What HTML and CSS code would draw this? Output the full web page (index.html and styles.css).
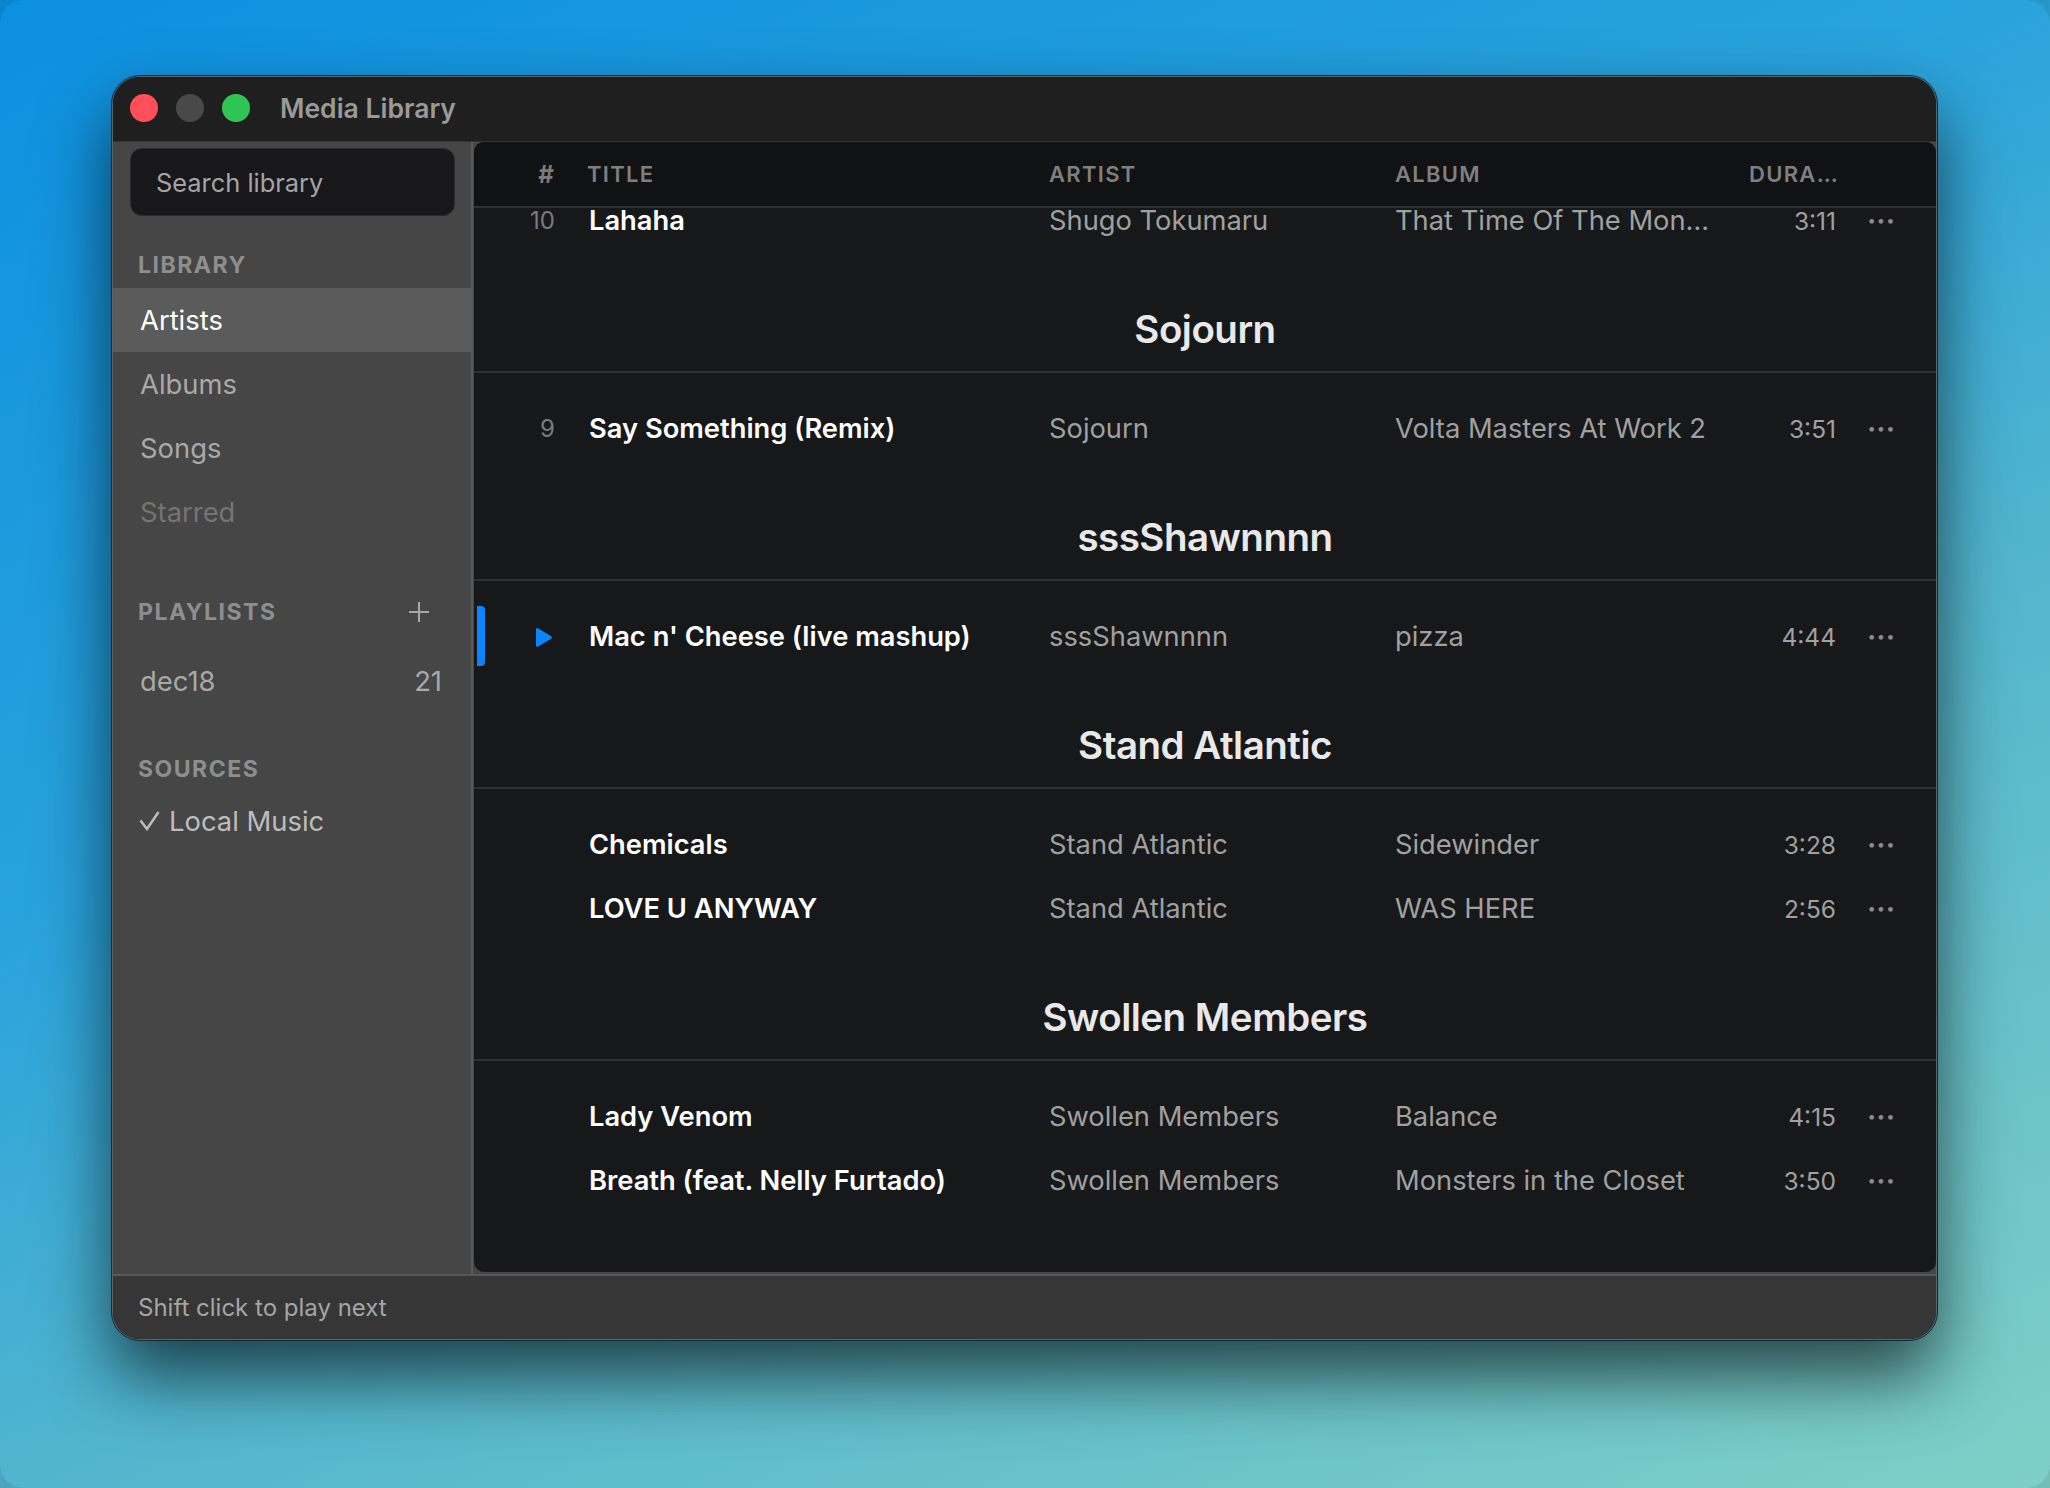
FILE: index.html
```html
<!DOCTYPE html>
<html lang="en">
<head>
  <meta charset="UTF-8">
  <title>Media Library</title>
  <link rel="stylesheet" href="styles.css">
</head>
<body>
  <div class="window">
    <div class="titlebar">
      <span class="light red"></span>
      <span class="light grey"></span>
      <span class="light green"></span>
      <span class="window-title">Media Library</span>
    </div>

    <div class="content">
      <div class="sidebar">
        <div class="search">Search library</div>

        <div class="side-head side-head-library">LIBRARY</div>
        <div class="side-item active">Artists</div>
        <div class="side-item">Albums</div>
        <div class="side-item">Songs</div>
        <div class="side-item muted">Starred</div>

        <div class="side-head side-head-playlists">
          <span>PLAYLISTS</span>
          <svg class="plus" width="20" height="20" viewBox="0 0 20 20"><path d="M10 0v20M0 10h20" stroke="#a8a8a8" stroke-width="2"/></svg>
        </div>
        <div class="side-item playlist"><span>dec18</span><span>21</span></div>

        <div class="side-head side-head-sources">SOURCES</div>
        <div class="source">
          <svg class="check" width="21" height="20" viewBox="0 0 21 20"><path d="M1.5 9.500l6.500 8.500L19.500 1" fill="none" stroke="#bdbdbd" stroke-width="2.500"/></svg>
          <span>Local Music</span>
        </div>
      </div>

      <div class="main">
        <div class="table-head">
          <span class="col-num">#</span>
          <span class="col-title">TITLE</span>
          <span class="col-artist">ARTIST</span>
          <span class="col-album">ALBUM</span>
          <span class="col-time">DURA…</span>
        </div>

        <div class="list">
          <div class="scroller">
            <div class="row">
              <span class="col-num">10</span>
              <span class="col-title">Lahaha</span>
              <span class="col-artist">Shugo Tokumaru</span>
              <span class="col-album">That Time Of The Mon…</span>
              <span class="col-time">3:11</span>
              <span class="more">···</span>
            </div>

            <h2 class="group">Sojourn</h2>
            <div class="row">
              <span class="col-num">9</span>
              <span class="col-title">Say Something (Remix)</span>
              <span class="col-artist">Sojourn</span>
              <span class="col-album">Volta Masters At Work 2</span>
              <span class="col-time">3:51</span>
              <span class="more">···</span>
            </div>

            <h2 class="group">sssShawnnnn</h2>
            <div class="row playing">
              <span class="col-num"><svg width="16" height="19" viewBox="0 0 16 19"><path d="M0 1.500C0 .4.9-.3 1.900.2l13.300 8c.9.6.9 2 0 2.600L1.900 18.800C.9 19.300 0 18.600 0 17.500z" fill="#0a84ff"/></svg></span>
              <span class="col-title">Mac n' Cheese (live mashup)</span>
              <span class="col-artist">sssShawnnnn</span>
              <span class="col-album">pizza</span>
              <span class="col-time">4:44</span>
              <span class="more">···</span>
            </div>

            <h2 class="group">Stand Atlantic</h2>
            <div class="row">
              <span class="col-num"></span>
              <span class="col-title">Chemicals</span>
              <span class="col-artist">Stand Atlantic</span>
              <span class="col-album">Sidewinder</span>
              <span class="col-time">3:28</span>
              <span class="more">···</span>
            </div>
            <div class="row">
              <span class="col-num"></span>
              <span class="col-title">LOVE U ANYWAY</span>
              <span class="col-artist">Stand Atlantic</span>
              <span class="col-album">WAS HERE</span>
              <span class="col-time">2:56</span>
              <span class="more">···</span>
            </div>

            <h2 class="group">Swollen Members</h2>
            <div class="row">
              <span class="col-num"></span>
              <span class="col-title">Lady Venom</span>
              <span class="col-artist">Swollen Members</span>
              <span class="col-album">Balance</span>
              <span class="col-time">4:15</span>
              <span class="more">···</span>
            </div>
            <div class="row">
              <span class="col-num"></span>
              <span class="col-title">Breath (feat. Nelly Furtado)</span>
              <span class="col-artist">Swollen Members</span>
              <span class="col-album">Monsters in the Closet</span>
              <span class="col-time">3:50</span>
              <span class="more">···</span>
            </div>
          </div>
        </div>
      </div>
    </div>

    <div class="statusbar">Shift click to play next</div>
  </div>
</body>
</html>
```

FILE: styles.css
```css
html, body {
  height: 100%;
}
body {
  margin: 0;
  box-sizing: border-box;
  padding: 76px 113px 148px 112px;
  font-family: Inter, sans-serif;
  background: linear-gradient(155deg, #0c90e0 0%, #2aa3dc 39%, #52b5ce 61%, #7fcfc6 100%);
  overflow: hidden;
}
/* faint rounded corners of the desktop picture */
body::after {
  content: "";
  position: fixed;
  inset: 0;
  border-radius: 24px;
  box-shadow: 0 0 0 24px rgba(0,0,0,0.08);
  pointer-events: none;
}

.window {
  height: 1264px;
  box-sizing: border-box;
  display: flex;
  flex-direction: column;
  background: #1f1f20;
  border: 1px solid #5f6366;
  outline: 1px solid #0f2a3a;
  border-radius: 28px;
  box-shadow: 0 36px 70px rgba(0,0,0,0.65);
  overflow: hidden;
}

/* title bar */
.titlebar {
  height: 64px;
  flex: none;
  box-sizing: border-box;
  padding: 0 0 2px 17px;
  display: flex;
  align-items: center;
  background: #1f1f20;
}
.light {
  width: 28px;
  height: 28px;
  border-radius: 50%;
  margin-right: 18px;
}
.red { background: #ff4f58; }
.grey { background: #494949; }
.green { background: #2fc552; }
.window-title {
  margin-left: 12px;
  font-size: 26.500px;
  font-weight: 600;
  color: #9a9a9a;
}

.content {
  flex: 1;
  min-height: 0;
  display: flex;
  background: #474747;
  border-top: 1px solid #333;
}

/* sidebar */
.sidebar {
  width: 358px;
  flex: none;
  padding-top: 6px;
  background: #464646;
  border-right: 2px solid #5a5a5a;
  color: #a9a9a9;
  font-size: 27.400px;
}
.search {
  height: 68px;
  margin: 0 16px 0 17px;
  padding-left: 25px;
  display: flex;
  align-items: center;
  box-sizing: border-box;
  background: #18181b;
  border: 1px solid #2b2b2e;
  border-radius: 12px;
  font-size: 25.400px;
  color: #a4a4a6;
}
.side-head {
  padding-left: 25px;
  font-size: 23px;
  font-weight: 700;
  letter-spacing: 1.500px;
  color: #8e8e8e;
}
.side-head-library { margin-top: 32px; line-height: 34px; margin-bottom: 6px; }
.side-head-playlists {
  display: flex;
  justify-content: space-between;
  align-items: center;
  margin-top: 51px;
  line-height: 34px;
  padding-right: 42px;
  margin-bottom: 20px;
}
.side-head-sources { margin-top: 39px; line-height: 34px; margin-bottom: 10px; }
.side-item {
  height: 64px;
  padding-left: 27px;
  display: flex;
  align-items: center;
}
.side-item.active {
  background: #5b5b5b;
  color: #fff;
}
.side-item.muted { color: #747474; }
.playlist {
  justify-content: space-between;
  padding-right: 29px;
}
.source {
  display: flex;
  align-items: center;
  height: 50px;
  padding-left: 26px;
  color: #bdbdbd;
}
.check { margin-right: 9px; }

/* track table */
.main {
  flex: 1;
  min-width: 0;
  display: flex;
  flex-direction: column;
  margin: 0 0 2px 1px;
  background: #17181a;
  border-radius: 10px;
  overflow: hidden;
}
.table-head, .row {
  display: grid;
  grid-template-columns: 81px 494px 346px 354px 87px 1fr;
  align-items: center;
}
.table-head {
  height: 66px;
  flex: none;
  box-sizing: border-box;
  background: #111214;
  border-bottom: 2px solid #2f3032;
  font-size: 22px;
  font-weight: 600;
  letter-spacing: 1.300px;
  color: #7f7f7f;
}
.table-head .col-num {
  text-align: right;
  font-weight: 700;
}

.list {
  flex: 1;
  min-height: 0;
}
.scroller { margin-top: -20px; }
.row {
  height: 64px;
  box-sizing: border-box;
  padding-top: 2px;
  position: relative;
  line-height: 1;
  font-size: 27.300px;
  color: #a0a0a0;
}
.col-num {
  text-align: right;
  font-size: 24px;
  color: #7b7b7b;
}
.col-title {
  padding-left: 34px;
}
.table-head .col-title { padding-left: 32px; }
.row .col-title {
  font-weight: 600;
  color: #fff;
}
.col-artist, .col-album {
  white-space: nowrap;
}
.row .col-time {
  text-align: right;
  font-size: 24.500px;
}
.more {
  padding-left: 31px;
  font-size: 28px;
  font-weight: 700;
  color: #8a8a8a;
}
.playing .col-num svg {
  display: block;
  margin-left: auto;
  margin-right: 3px;
}
.playing::before {
  content: "";
  position: absolute;
  left: 3px;
  top: 2px;
  width: 8px;
  height: 60px;
  background: #0a84ff;
  border-radius: 0 4px 4px 0;
}

.group {
  box-sizing: border-box;
  margin: 49px 0 23px;
  height: 72px;
  line-height: 56px;
  text-align: center;
  font-size: 38.500px;
  font-weight: 600;
  letter-spacing: -0.500px;
  color: #e9e9e9;
  border-bottom: 2px solid #2f3032;
}

/* status bar */
.statusbar {
  height: 63px;
  flex: none;
  display: flex;
  align-items: center;
  padding-left: 25px;
  background: #363636;
  border-top: 2px solid #575757;
  font-size: 24px;
  color: #a5a5a5;
}
```
